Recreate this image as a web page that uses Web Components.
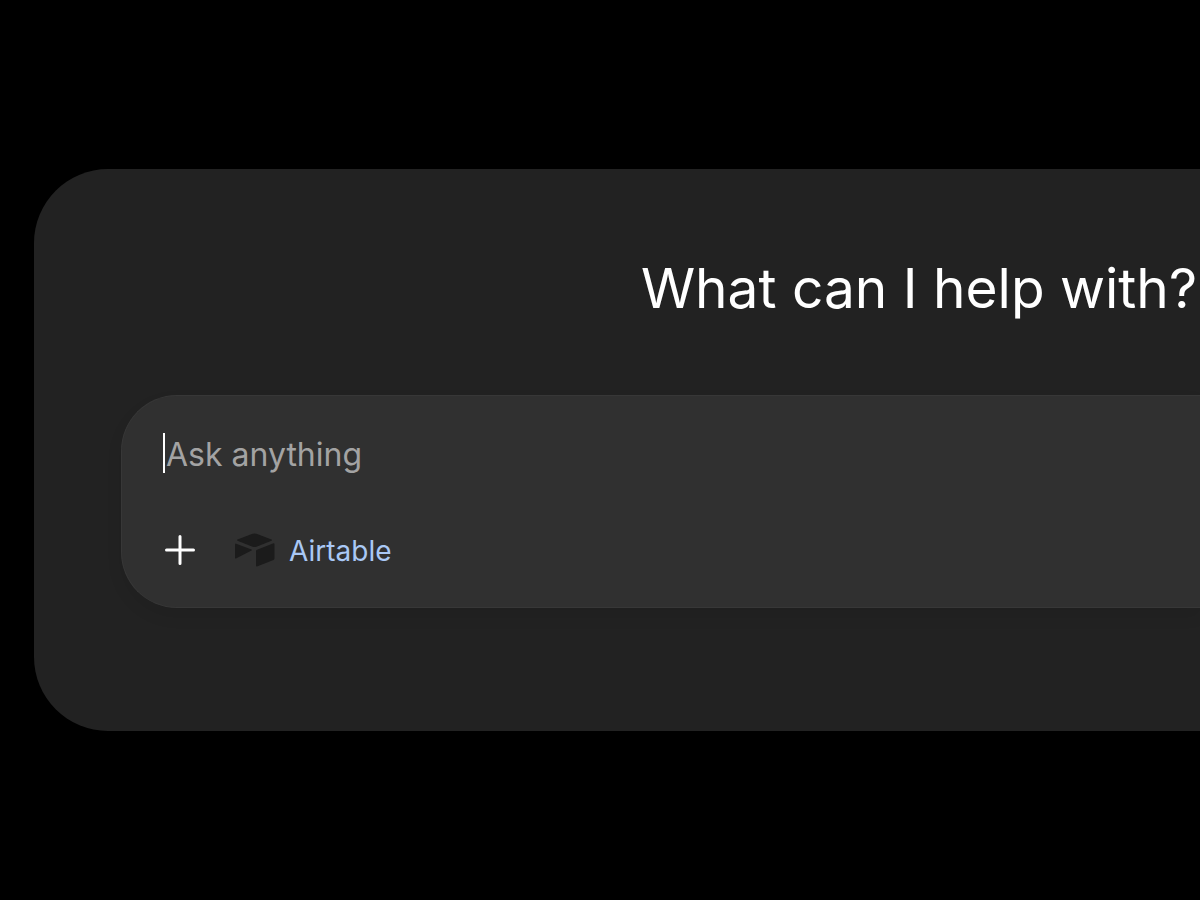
<!DOCTYPE html>
<html lang="en">
<head>
<meta charset="utf-8">
<meta name="viewport" content="width=device-width, initial-scale=1">
<title>What can I help with?</title>
<style>
  body {
    margin: 0;
    min-height: 100vh;
    display: grid;
    align-items: center;
    background: #000;
    font-family: Inter, "Liberation Sans", sans-serif;
    overflow-x: hidden;
  }
</style>
</head>
<body>
<chat-panel>
  <span slot="title">What can I help with?</span>
  <chat-composer placeholder="Ask anything">
    <app-chip>Airtable</app-chip>
  </chat-composer>
</chat-panel>
<script>
  class ChatPanel extends HTMLElement {
    constructor() {
      super();
      this.attachShadow({ mode: "open" }).innerHTML = `
        <style>
          :host {
            display: flex;
            flex-direction: column;
            gap: 73px;
            margin-left: 34px;
            padding: 85px 0 123px 87px;
            background: #222;
            border-radius: 74px 0 0 74px;
          }
          h1 {
            margin: 0;
            padding-right: 3px;
            text-align: right;
            font-size: 55px;
            line-height: 68px;
            font-weight: 400;
            color: #fff;
          }
        </style>
        <h1><slot name="title"></slot></h1>
        <slot></slot>`;
    }
  }

  class ChatComposer extends HTMLElement {
    constructor() {
      super();
      this.attachShadow({ mode: "open" }).innerHTML = `
        <style>
          :host {
            display: flex;
            flex-direction: column;
            gap: 53px;
            padding: 37px 40px 37px 41px;
            background: #303030;
            border: 1px solid #373737;
            border-right: 0;
            border-radius: 56px 0 0 56px;
            box-shadow: 0 8px 16px rgba(0, 0, 0, 0.08);
          }
          .field { display: flex; align-items: flex-start; }
          .caret { flex: none; width: 2px; height: 40px; background: #fff; }
          input {
            box-sizing: border-box;
            flex: 1;
            min-width: 0;
            height: 44px;
            padding: 0 0 0 1px;
            border: 0;
            outline: 0;
            background: none;
            color: #fff;
            caret-color: transparent;
            font: 400 32px/44px Inter, "Liberation Sans", sans-serif;
          }
          input::placeholder { color: #a3a3a3; opacity: 1; }
          .tools { display: flex; align-items: center; gap: 38px; padding-left: 1px; }
          .add {
            display: flex;
            padding: 4px 0;
            border: 0;
            background: none;
            color: #fff;
          }
        </style>
        <div class="field">
          <span class="caret"></span>
          <input type="text" aria-label="Message">
        </div>
        <div class="tools">
          <button class="add" type="button" aria-label="Add">
            <svg width="32" height="32" viewBox="0 0 32 32" fill="none" stroke="currentColor" stroke-width="3" stroke-linecap="round"><path d="M16 2.5v27M2.5 16h27"/></svg>
          </button>
          <slot></slot>
        </div>`;
    }
    connectedCallback() {
      this.shadowRoot.querySelector("input").placeholder = this.getAttribute("placeholder") || "";
    }
  }

  class AppChip extends HTMLElement {
    constructor() {
      super();
      this.attachShadow({ mode: "open" }).innerHTML = `
        <style>
          :host { display: block; }
          button {
            display: flex;
            align-items: center;
            gap: 14px;
            padding: 0;
            border: 0;
            background: none;
            color: #a9c8f5;
            font: 400 28px/40px Inter, "Liberation Sans", sans-serif;
          }
          .label { padding-top: 2px; line-height: 38px; }
        </style>
        <button type="button">
          <svg width="41" height="34" viewBox="0 0 41 34" fill="#1b1b1b" aria-hidden="true">
            <path d="M18.500 .8q2-.8 4 0L37.500 6.500q1.200.6 0 1.200L22.500 13.700q-2 .8-4 0L3.500 7.700q-1.200-.6 0-1.200z"/>
            <path d="M1 11.500q0-1.200 1.200-.8L17.500 16.400q1 .6 0 1.200L2 25.500q-1 .4-1-.8z"/>
            <path d="M22 18.300q0-1.100 1-1.500L39.500 10.200q1-.3 1 .8V25.500q0 1-1 1.400L23 33.400q-1 .3-1-.8z"/>
          </svg>
          <span class="label"><slot></slot></span>
        </button>`;
    }
  }

  customElements.define("chat-panel", ChatPanel);
  customElements.define("chat-composer", ChatComposer);
  customElements.define("app-chip", AppChip);
</script>
</body>
</html>
